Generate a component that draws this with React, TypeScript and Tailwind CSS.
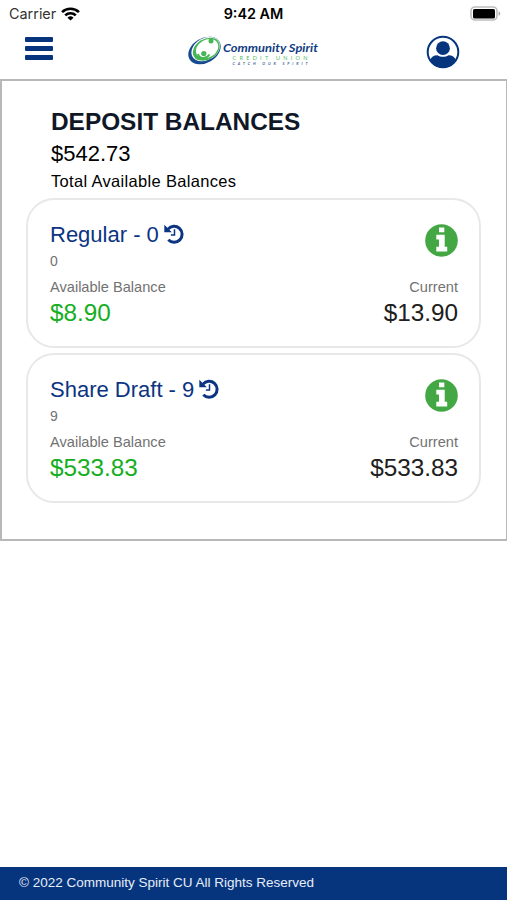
type Account = { name: string; id: string; available: string; current: string };

const accounts: Account[] = [
  { name: "Regular - 0", id: "0", available: "$8.90", current: "$13.90" },
  { name: "Share Draft - 9", id: "9", available: "$533.83", current: "$533.83" },
];

function WifiIcon() {
  return (
    <svg width="19" height="14" viewBox="0 0 18 14" preserveAspectRatio="none" fill="none" stroke="#000" strokeWidth="2.5">
      <path d="M1 5.1a11.4 11.4 0 0 1 16 0" />
      <path d="M4 8.3a7.1 7.1 0 0 1 10 0" />
      <path d="M9 13.6 6.1 10.7a4.1 4.1 0 0 1 5.8 0z" fill="#000" stroke="none" />
    </svg>
  );
}

function BatteryIcon() {
  return (
    <svg width="31" height="16" viewBox="0 0 31 16">
      <rect x="1" y="1" width="26" height="13" rx="4" fill="#fff" stroke="#bdbdbd" strokeWidth="1.6" />
      <rect x="3" y="3" width="22" height="9.5" rx="1.5" fill="#000" />
      <path d="M28.6 5.2c2.2.8 2.2 3.8 0 4.6z" fill="#aaa" />
    </svg>
  );
}

function HistoryIcon() {
  return (
    <svg width="20" height="20" viewBox="0 0 20 20" fill="none" stroke="#0b3482">
      <path d="M4 5.1A8 8 0 1 1 4.3 15.8" strokeWidth="3" />
      <path d="M.3.8 7.8 8.2H.3z" fill="#0b3482" stroke="none" />
      <path d="M10.500 5.300v5.800H6.900" strokeWidth="1.500" />
    </svg>
  );
}

function InfoIcon() {
  return (
    <svg width="33" height="33" viewBox="0 0 33 33">
      <circle cx="16.500" cy="16.500" r="16.300" fill="#43a843" />
      <path d="M14 3.500h5.300v4.800H14zM11.300 10.800h8.400v12h2.500V27.500H11.300v-4.700H14v-7.300h-2.700z" fill="#fff" />
    </svg>
  );
}

function Logo() {
  return (
    <svg width="132" height="32" viewBox="0 0 132 32">
      <g transform="rotate(-30 16.500 14.500)">
        <ellipse cx="16.500" cy="14.500" rx="17.300" ry="12.300" fill="#174a91" />
        <ellipse cx="18.300" cy="13.900" rx="15.300" ry="11" fill="#fff" />
        <ellipse cx="18.700" cy="14.300" rx="14.300" ry="10.300" fill="#45b653" />
        <ellipse cx="19.700" cy="14.200" rx="11.800" ry="8.900" fill="#fff" />
      </g>
      <circle cx="23" cy="5" r="2.500" fill="#45b653" />
      <circle cx="15.800" cy="17.500" r="2.600" fill="#45b653" />
      <path d="M10 18c1 5 8 5.500 11.500.5" fill="none" stroke="#45b653" strokeWidth="1.800" />
      <text
        x="35"
        y="16"
        textLength="95"
        lengthAdjust="spacingAndGlyphs"
        fill="#123c82"
        className="font-['Lato',sans-serif] text-[12px] font-bold italic"
      >
        Community Spirit
      </text>
      <text x="44.500" y="24" textLength="75" fill="#55b964" className="font-['Lato',sans-serif] text-[5.500px]">
        CREDIT UNION
      </text>
      <text
        x="44.500"
        y="28.500"
        textLength="75"
        fill="#4a6a9e"
        className="font-['Lato',sans-serif] text-[3.800px] font-bold italic"
      >
        CATCH OUR SPIRIT
      </text>
    </svg>
  );
}

function ProfileIcon() {
  return (
    <svg width="34" height="34" viewBox="0 0 34 34">
      <circle cx="17" cy="17" r="15.300" fill="#fff" stroke="#06357e" strokeWidth="2" />
      <circle cx="17" cy="13.200" r="6.900" fill="#06357e" />
      <path d="M4 25.500c1-3.600 3.800-5.300 7.500-5.300 3.300 2 7.700 2 11 0 3.700 0 6.500 1.700 7.500 5.300A15.300 15.300 0 0 1 4 25.500z" fill="#06357e" />
    </svg>
  );
}

function AccountCard({ name, id, available, current }: Account) {
  return (
    <article className="flex h-[150px] justify-between rounded-[28px] border-2 border-[#e8e8e8] pt-[21px] pr-[21px] pl-[22px]">
      <div className="flex flex-col">
        <h2 className="flex h-[26px] items-center gap-[5px] text-[22px] leading-[26px] text-[#0b3482]">
          <span className="pt-px">{name}</span>
          <HistoryIcon />
        </h2>
        <span className="mt-[4px] h-5 text-[14px] leading-5 text-[#727272]">{id}</span>
        <span className="mt-[6px] h-5 text-[14.600px] leading-5 text-[#727272]">Available Balance</span>
        <span className="h-8 text-[24.300px] leading-8 text-[#16ae22]">{available}</span>
      </div>
      <div className="flex flex-col items-end">
        <span className="mt-[3px]">
          <InfoIcon />
        </span>
        <span className="mt-[20px] h-5 text-[14.600px] leading-5 text-[#727272]">Current</span>
        <span className="h-8 text-[24.300px] leading-8 text-[#202020]">{current}</span>
      </div>
    </article>
  );
}

export default function App() {
  return (
    <div className="flex h-[900px] w-[507px] flex-col overflow-hidden bg-white font-['Liberation_Sans',Arial,sans-serif] text-black">
      <div className="grid h-7 grid-cols-3 items-center pr-[6px] pl-[9px] font-['Inter',sans-serif] text-[14.400px]">
        <div className="flex items-center gap-[5px] text-[#333]">
          Carrier
          <WifiIcon />
        </div>
        <span className="pr-[3px] text-center font-semibold">9:42 AM</span>
        <div className="flex justify-end">
          <BatteryIcon />
        </div>
      </div>
      <header className="flex h-[51px] items-start justify-between pr-[47px] pl-[25px]">
        <button aria-label="Menu" className="mt-[9px] flex w-[28px] flex-col gap-1">
          <span className="h-[5px] rounded-[1px] bg-[#06357e]" />
          <span className="h-[5px] rounded-[1px] bg-[#06357e]" />
          <span className="h-[5px] rounded-[1px] bg-[#06357e]" />
        </button>
        <div className="mt-[8px] ml-[29px]">
          <Logo />
        </div>
        <button aria-label="Profile" className="mt-[7px]">
          <ProfileIcon />
        </button>
      </header>
      <main className="h-[462px] border-2 border-r border-[#b8b8b8] pt-[28px] pr-[25px] pl-6">
        <h1 className="ml-[25px] h-[26px] text-[24.400px] leading-[26px] font-bold text-[#101828]">DEPOSIT BALANCES</h1>
        <p className="ml-[25px] mt-[5px] h-7 text-[22px] leading-7">$542.73</p>
        <p className="ml-[25px] mt-[3px] h-5 text-[16.500px] leading-5 tracking-[0.320px]">Total Available Balances</p>
        <div className="mt-[7px] flex flex-col gap-[5px]">
          {accounts.map((account) => (
            <AccountCard key={account.id} {...account} />
          ))}
        </div>
      </main>
      <footer className="mt-auto flex h-[33px] items-center bg-[#06357e] pb-px pl-[19px] text-[13.500px] text-[#e6edf8]">
        © 2022 Community Spirit CU All Rights Reserved
      </footer>
    </div>
  );
}
